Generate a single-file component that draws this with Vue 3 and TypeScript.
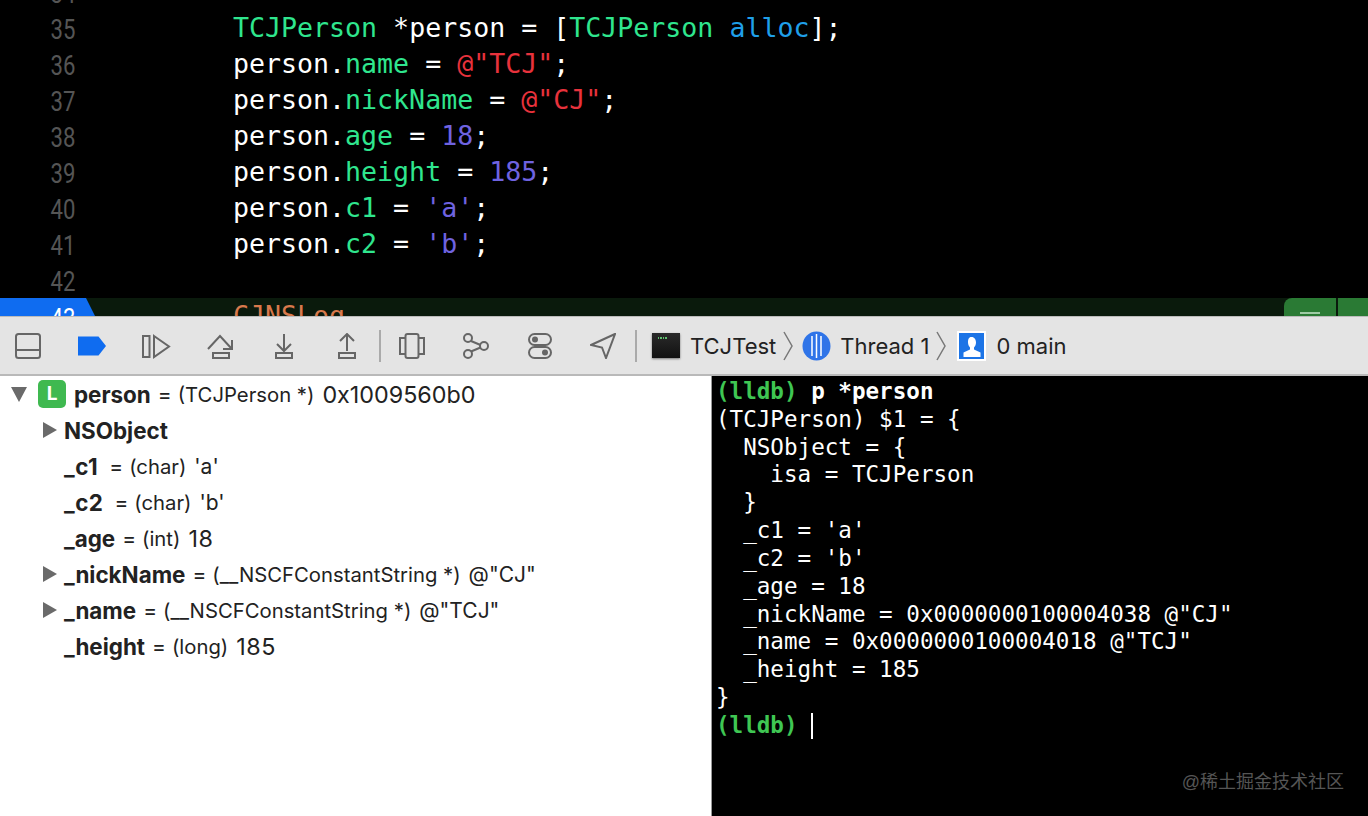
<script setup lang="ts">
interface Seg { t: string; c?: string }
interface Line { n: number; segs: Seg[] }
const p = (t: string): Seg => ({ t, c: 'prop' })
const s = (t: string): Seg => ({ t, c: 'str' })
const d = (t: string): Seg => ({ t, c: 'lit' })
const w = (t: string): Seg => ({ t })
const lines: Line[] = [
  { n: 34, segs: [] },
  { n: 35, segs: [p('TCJPerson'), w(' *person = ['), p('TCJPerson'), w(' '), { t: 'alloc', c: 'call' }, w('];')] },
  { n: 36, segs: [w('person.'), p('name'), w(' = '), s('@"TCJ"'), w(';')] },
  { n: 37, segs: [w('person.'), p('nickName'), w(' = '), s('@"CJ"'), w(';')] },
  { n: 38, segs: [w('person.'), p('age'), w(' = '), d('18'), w(';')] },
  { n: 39, segs: [w('person.'), p('height'), w(' = '), d('185'), w(';')] },
  { n: 40, segs: [w('person.'), p('c1'), w(' = '), d("'a'"), w(';')] },
  { n: 41, segs: [w('person.'), p('c2'), w(' = '), d("'b'"), w(';')] },
  { n: 42, segs: [] },
]
interface Row { arrow: boolean; name: string; type?: string; value?: string; text?: boolean; short?: boolean }
const rows: Row[] = [
  { arrow: true, name: 'NSObject' },
  { arrow: false, name: '_c1', type: '(char)', value: "'a'", text: true, short: true },
  { arrow: false, name: '_c2', type: '(char)', value: "'b'", text: true, short: true },
  { arrow: false, name: '_age', type: '(int)', value: '18' },
  { arrow: true, name: '_nickName', type: '(__NSCFConstantString *)', value: '@"CJ"', text: true },
  { arrow: true, name: '_name', type: '(__NSCFConstantString *)', value: '@"TCJ"', text: true },
  { arrow: false, name: '_height', type: '(long)', value: '185' },
]
const output = `(TCJPerson) $1 = {
  NSObject = {
    isa = TCJPerson
  }
  _c1 = 'a'
  _c2 = 'b'
  _age = 18
  _nickName = 0x0000000100004038 @"CJ"
  _name = 0x0000000100004018 @"TCJ"
  _height = 185
}`
</script>

<template>
  <div class="page">
    <section class="editor">
      <div v-for="l in lines" :key="l.n" class="line">
        <span class="num"><span class="digits">{{ l.n }}</span></span>
        <span class="code"><span v-for="(g, i) in l.segs" :key="i" :class="g.c">{{ g.t }}</span></span>
      </div>
      <div class="line current">
        <span class="gutter-mark"><span class="digits">43</span></span>
        <span class="code"><span class="macro">CJNSLog</span></span>
        <div class="bp-buttons"><span class="bp-a"><i></i></span><span class="bp-b"></span></div>
      </div>
    </section>

    <nav class="toolbar">
      <div class="tools first">
        <svg class="ic" viewBox="0 0 26 26"><rect x="1" y="1" width="24" height="24" rx="2.5" /><path d="M1 17h24" /></svg>
        <svg class="ic wide" viewBox="0 0 30 26"><path class="fill" d="M1 3.500h20.500l7.500 9.500-7.500 9.500H1z" /></svg>
        <svg class="ic wide" viewBox="0 0 30 26"><rect x="2" y="3" width="6.500" height="21" /><path d="M13 3l15 10.500-15 10.500z" /></svg>
        <svg class="ic wide" viewBox="0 0 30 26"><path d="M2 16L14 3l11 12" /><path d="M26 7v9h-9" /><rect x="7" y="20" width="16" height="5" /></svg>
        <svg class="ic" viewBox="0 0 26 26"><path d="M13 1v17M6 11l7 7 7-7" /><rect x="5" y="20" width="16" height="5" /></svg>
        <svg class="ic" viewBox="0 0 26 26"><path d="M13 18V1M6 8l7-7 7 7" /><rect x="5" y="20" width="16" height="5" /></svg>
      </div>
      <span class="sep"></span>
      <div class="tools second">
        <svg class="ic" viewBox="0 0 26 26"><rect x="6.500" y="1" width="13" height="24" rx="2" /><path d="M6.500 5H1v16h5.500M19.500 5H25v16h-5.500" /></svg>
        <svg class="ic" viewBox="0 0 26 26"><circle cx="5" cy="5" r="4" /><circle cx="21" cy="13" r="4" /><circle cx="5" cy="21" r="4" /><path d="M8 8l9.500 4M8 18.500l9.500-4" /></svg>
        <svg class="ic" viewBox="0 0 26 26"><rect x="2" y="1" width="22" height="11" rx="5.500" /><rect x="2" y="14" width="22" height="11" rx="5.500" /><circle class="dot" cx="8" cy="6.500" r="3" /><circle class="dot" cx="18" cy="19.500" r="3" /></svg>
        <svg class="ic" viewBox="0 0 26 26"><path d="M25 1L1 12l11 2.500L16 25z" /></svg>
      </div>
      <span class="sep"></span>
      <div class="crumbs">
        <span class="term-icon"><i></i></span>
        <span class="crumb">TCJTest</span>
        <svg class="chev" viewBox="0 0 10 30"><path d="M1 1l8 14-8 14" /></svg>
        <svg class="thread" viewBox="0 0 29 30"><ellipse cx="14.500" cy="15" rx="14" ry="14.500" fill="#2f74e8" /><path d="M10 5v20M14.500 3v24M19 5v20" stroke="#fff" stroke-width="1.500" /></svg>
        <span class="crumb">Thread 1</span>
        <svg class="chev" viewBox="0 0 10 30"><path d="M1 1l8 14-8 14" /></svg>
        <svg class="frame" viewBox="0 0 29 30"><rect x="1" y="1" width="27" height="28" fill="#1c74e6" stroke="#fff" stroke-width="2" /><path fill="#fff" d="M14.500 6c3 0 4.500 2.500 4.500 5.500 0 2-1 4-2 5v2l6.500 3V26H6.500v-4.500l6.500-3v-2c-1-1-2-3-2-5C11 8.500 11.500 6 14.500 6z" /></svg>
        <span class="crumb">0 main</span>
      </div>
    </nav>

    <main class="debug">
      <div class="vars">
        <div class="row top">
          <span class="tri down"></span>
          <span class="badge">L</span>
          <b>person</b><span class="eq">=</span><span class="type">(TCJPerson *)</span><span class="val">0x1009560b0</span>
        </div>
        <div v-for="r in rows" :key="r.name" class="row child" :class="{ short: r.short }">
          <span class="slot"><span v-if="r.arrow" class="tri right"></span></span>
          <b>{{ r.name }}</b>
          <template v-if="r.type"><span class="eq">=</span><span class="type">{{ r.type }}</span><span class="val" :class="{ text: r.text }">{{ r.value }}</span></template>
        </div>
      </div>
      <div class="console">
        <pre class="out"><span class="prompt">(lldb)</span> <b>p *person</b>
{{ output }}
<span class="prompt">(lldb)</span> <span class="caret"></span></pre>
        <span class="mark">@稀土掘金技术社区</span>
      </div>
    </main>
  </div>
</template>

<style>
html, body { margin: 0; background: #000; }
</style>

<style scoped>
.page { width: 1368px; height: 816px; display: flex; flex-direction: column; overflow: hidden; background: #fff; }

.editor { height: 316px; flex: none; background: #000; overflow: hidden; position: relative; }
.line { height: 36px; display: flex; align-items: center; position: relative; top: -26px; font: 26.6px/36px "DejaVu Sans Mono", monospace; color: #fff; white-space: pre; }
.num { width: 75px; text-align: right; font: 27px/36px Roboto, sans-serif; color: #555; flex: none; padding-top: 3px; box-sizing: border-box; }
.digits { display: inline-block; transform: scaleX(.82); transform-origin: right center; }
.code { padding-left: 158px; }
.prop { color: #2fe68e; }
.call { color: #1f9fe8; }
.str { color: #e8323c; }
.lit { color: #6f63e0; }
.macro { color: #d8794c; }
.current { background: #0a1a0c; }
.gutter-mark { width: 95px; margin-right: -20px; height: 36px; background: #0f6cf0; color: #fff; font: 27px/36px Roboto, sans-serif; text-align: right; box-sizing: border-box; padding-right: 20px; padding-top: 3px; flex: none; clip-path: polygon(0 0, 86px 0, 95px 18px, 95px 36px, 0 36px); }
.bp-buttons { position: absolute; right: 0; top: 0; height: 36px; display: flex; gap: 2px; }
.bp-a { width: 52px; background: #2a7a34; border-radius: 8px 0 0 0; position: relative; }
.bp-a i { position: absolute; left: 16px; top: 14px; width: 20px; height: 2px; background: #9fcba5; }
.bp-b { width: 30px; background: #2a7a34; }

.toolbar { height: 57px; flex: none; background: #e4e4e4; border-top: 1px solid #bbb; border-bottom: 2px solid #b9b9b9; display: flex; align-items: center; }
.tools { display: flex; align-items: center; }
.ic { width: 26px; height: 26px; fill: none; stroke: #666; stroke-width: 2; flex: none; }
.ic.wide { width: 30px; }
.first { padding: 0 19px 0 15px; gap: 36px; }
.first .ic:nth-child(2) { margin-right: -2px; }
.first .ic:nth-child(3), .first .ic:nth-child(4) { margin-right: -1px; }
.first .ic:nth-child(5) { margin-right: 1px; }
.second { padding: 0 19px 0 18px; gap: 38px; }
.second .ic:nth-child(3) { margin-right: -1px; }
.ic .fill { fill: #0f6cf0; stroke: none; }
.ic .dot { fill: #666; stroke: none; }
.sep { width: 2px; height: 32px; background: #aaa; flex: none; }
.crumbs { display: flex; align-items: center; padding-left: 15px; }
.crumb { font: 22px/30px Inter, sans-serif; color: #222; }
.term-icon { width: 28px; height: 25px; background: linear-gradient(#2a2a2a, #111); box-shadow: 0 1px 2px #777; position: relative; margin-right: 10px; }
.term-icon i { position: absolute; left: 6px; top: 4px; width: 9px; height: 2px; background: repeating-linear-gradient(90deg, #5fbf6f 0 1.500px, transparent 1.500px 2.500px); }
.chev { width: 10px; height: 30px; margin: 0 9px 0 7px; fill: none; stroke: #777; stroke-width: 1.500; flex: none; }
.thread, .frame { width: 29px; height: 30px; margin-right: 9px; flex: none; }
.frame { margin-left: 2px; margin-right: 10px; }

.debug { flex: 1; display: flex; min-height: 0; }
.vars { width: 711px; flex: none; background: #fff; box-sizing: border-box; font-family: Inter, sans-serif; color: #222; }
.row { height: 36px; display: flex; align-items: center; white-space: pre; }
.row b { font-size: 22.4px; font-weight: 700; }
.eq { font-size: 21px; margin: 0 6px 0 7px; }
.short .eq { margin-left: 11px; }
.short b { letter-spacing: .5px; }
.type { font-size: 20.3px; margin-right: 8px; }
.val { font-size: 23.3px; letter-spacing: .6px; }
.top .val { letter-spacing: 0; }
.val.text { font-size: 21px; letter-spacing: 0; }
.top { padding-left: 11px; }
.child { padding-left: 43px; }
.slot { width: 21px; flex: none; display: flex; }
.tri { display: block; width: 0; height: 0; }
.tri.down { border-left: 8px solid transparent; border-right: 8px solid transparent; border-top: 15px solid #6a6a6a; margin-right: 11px; }
.tri.right { border-top: 8px solid transparent; border-bottom: 8px solid transparent; border-left: 14px solid #6a6a6a; }
.badge { width: 28px; height: 28px; background: #3fb950; border-radius: 5px; color: #fff; font: 700 19px/28px Inter, sans-serif; text-align: center; margin-right: 8px; }

.console { flex: 1; background: #000; position: relative; border-left: 1px solid #999; min-width: 0; }
.out { margin: 0; padding: 2px 0 0 4px; font: 22.58px/27.83px "DejaVu Sans Mono", monospace; color: #fff; white-space: pre; }
.out b, .prompt { font-weight: 700; }
.prompt { color: #3fc653; }
.caret { display: inline-block; width: 2px; height: 26px; background: #fff; vertical-align: -6px; }
.mark { position: absolute; right: 24px; bottom: 22px; font: 18px/24px "Liberation Sans", "Noto Sans CJK SC", sans-serif; color: #555; }
</style>
